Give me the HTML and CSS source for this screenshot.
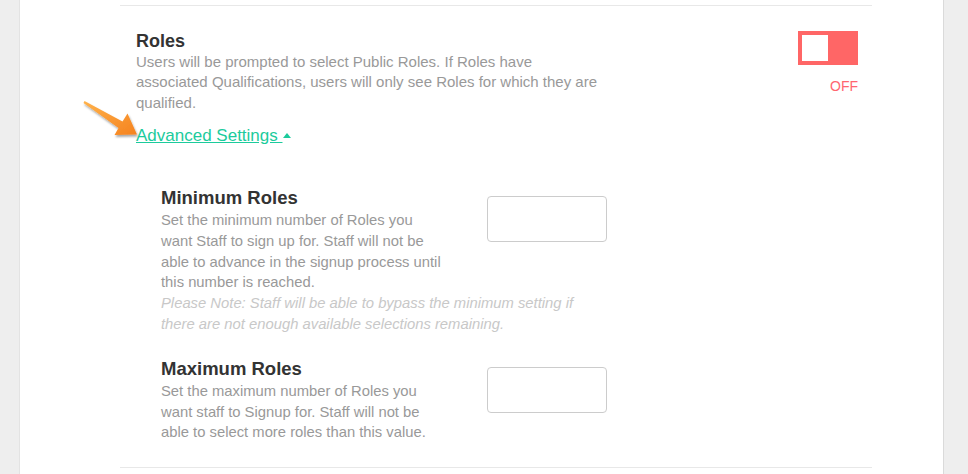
FILE: index.html
```html
<!DOCTYPE html>
<html lang="en">
<head>
<meta charset="utf-8">
<title>Roles settings</title>
<link rel="stylesheet" href="styles.css">
</head>
<body>
<div class="panel">
  <div class="content">
    <div class="divider"></div>
    <section class="setting">
      <div class="setting-row">
        <div class="setting-text">
          <h2 class="setting-title">Roles</h2>
          <p class="setting-desc">Users will be prompted to select Public Roles. If Roles have associated Qualifications, users will only see Roles for which they are qualified.</p>
          <div class="adv-row"><a class="adv-link" href="#">Advanced Settings <span class="caret"></span></a></div>
        </div>
        <div class="toggle-col">
          <div class="toggle"><div class="knob"></div></div>
          <div class="toggle-label">OFF</div>
        </div>
      </div>
      <div class="advanced">
        <div class="sub">
          <div class="sub-row">
            <div class="sub-text">
              <h3 class="sub-title">Minimum Roles</h3>
              <p class="sub-desc">Set the minimum number of Roles you want Staff to sign up for. Staff will not be able to advance in the signup process until this number is reached.</p>
            </div>
            <input class="num-input" type="text">
          </div>
          <p class="sub-note">Please Note: Staff will be able to bypass the minimum setting if there are not enough available selections remaining.</p>
        </div>
        <div class="sub">
          <div class="sub-row">
            <div class="sub-text">
              <h3 class="sub-title">Maximum Roles</h3>
              <p class="sub-desc">Set the maximum number of Roles you want staff to Signup for. Staff will not be able to select more roles than this value.</p>
            </div>
            <input class="num-input" type="text">
          </div>
        </div>
      </div>
    </section>
    <div class="divider"></div>
  </div>
  <svg class="arrow" width="75" height="50" viewBox="0 0 75 50" aria-hidden="true">
    <defs>
      <linearGradient id="ag" x1="0" y1="0" x2="1" y2="1">
        <stop offset="0" stop-color="#ffb24a"/>
        <stop offset="1" stop-color="#f5821f"/>
      </linearGradient>
      <filter id="sh" x="-20%" y="-20%" width="150%" height="150%">
        <feDropShadow dx="1" dy="2" stdDeviation="1.2" flood-color="#000" flood-opacity="0.35"/>
      </filter>
    </defs>
    <polygon filter="url(#sh)" fill="url(#ag)" points="13.5,6 51.5,26.5 56.5,18.5 66,39.5 43.5,40 47.5,33 12.5,8"/>
  </svg>
</div>
</body>
</html>
```
FILE: styles.css
```css
html, body {
  margin: 0;
  padding: 0;
}
body {
  background: #eeeeee;
  font-family: "Liberation Sans", Arial, sans-serif;
  height: 474px;
  overflow: hidden;
}
.panel {
  position: relative;
  box-sizing: border-box;
  margin-left: 19px;
  width: 925px;
  height: 474px;
  background: #fff;
  border-left: 1px solid #e3e3e3;
  border-right: 1px solid #dadada;
  padding: 5px 71px 0 100px;
}
.divider {
  height: 1px;
  background: #e8e8e8;
}
.setting {
  padding: 0 14px 0 16px;
}
.setting-row {
  display: flex;
  justify-content: space-between;
  align-items: flex-start;
  padding-top: 26px;
}
.setting-title {
  margin: 0;
  font-size: 18px;
  line-height: 18px;
  font-weight: bold;
  color: #333;
}
.setting-desc {
  margin: 1.5px 0 0;
  width: 466px;
  font-size: 15px;
  line-height: 20.5px;
  color: #999;
}
.adv-row {
  margin-top: 13px;
  font-size: 17px;
  line-height: 20px;
}
.adv-link {
  color: #1ccb9c;
  text-decoration: underline;
}
.caret {
  display: inline-block;
  width: 0;
  height: 0;
  margin-left: 1px;
  border-left: 4px solid transparent;
  border-right: 4px solid transparent;
  border-bottom: 5px solid #1ccb9c;
  vertical-align: 3px;
}
.toggle-col {
  display: flex;
  flex-direction: column;
  align-items: flex-end;
  margin-top: -1px;
}
.toggle {
  box-sizing: border-box;
  width: 60px;
  height: 34px;
  padding: 4px;
  background: #ff6666;
}
.knob {
  width: 26px;
  height: 26px;
  background: #fff;
}
.toggle-label {
  margin-top: 13px;
  font-size: 14px;
  line-height: 16px;
  color: #ff6670;
}
.advanced {
  padding: 42px 0 24px 25px;
}
.sub + .sub {
  margin-top: 24px;
}
.sub-row {
  display: flex;
  align-items: flex-start;
}
.sub-text {
  width: 326px;
}
.sub-title {
  margin: 0;
  font-size: 18.5px;
  line-height: 20px;
  font-weight: bold;
  color: #333;
}
.sub-desc {
  margin: 2px 0 0;
  width: 287px;
  font-size: 14.8px;
  line-height: 20.8px;
  color: #999;
}
.num-input {
  box-sizing: border-box;
  width: 120px;
  height: 46px;
  margin: 8px 0 0;
  border: 1px solid #cccccc;
  border-radius: 4px;
  background: #fff;
}
.sub-note {
  margin: 0;
  width: 440px;
  font-size: 14.8px;
  line-height: 20.8px;
  font-style: italic;
  color: #c8c8c8;
}
.arrow {
  position: absolute;
  left: 51px;
  top: 95px;
}
```
